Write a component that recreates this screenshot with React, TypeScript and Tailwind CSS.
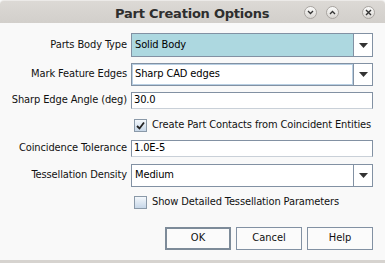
import React from "react";

const font = { fontFamily: '"DejaVu Sans Condensed", "DejaVu Sans", sans-serif' };

function Arrow() {
  return (
    <svg width="9" height="5" viewBox="0 0 9 5">
      <path d="M0 0 H9 L4.5 5 Z" fill="#333" />
    </svg>
  );
}

function Combo({ value, blue, focus }: { value: string; blue?: boolean; focus?: boolean }) {
  return (
    <div className="flex h-full w-full">
      <div
        className={`flex flex-1 items-center border border-[#8291a3] pl-[3px] text-[11px] tracking-[-0.12px] text-black ${
          blue ? "bg-[#add8e0]" : "bg-white"
        } ${focus ? "shadow-[inset_0_0_0_1px_#b8cfe3]" : ""}`}
      >
        {value}
      </div>
      <div className="flex w-[19px] items-center justify-center border border-l-0 border-[#8291a3] bg-white">
        <Arrow />
      </div>
    </div>
  );
}

function TextField({ value }: { value: string }) {
  return (
    <div className="flex h-full w-full items-center border border-[#8291a3] border-b-[#c9d0d8] bg-white pl-[2px] text-[11px] tracking-[-0.12px] text-black">
      {value}
    </div>
  );
}

function Check({ checked }: { checked?: boolean }) {
  return (
    <div className="flex h-[13px] w-[13px] items-center justify-center border border-[#8a99a8] bg-gradient-to-b from-[#f4f8fc] to-[#c7d7e8]">
      {checked && (
        <svg width="9" height="9" viewBox="0 0 9 9">
          <path d="M1 5 L3.5 7.5 L8 1.5" stroke="#222" strokeWidth="1.8" fill="none" />
        </svg>
      )}
    </div>
  );
}

function TitleBtn({ children }: { children: React.ReactNode }) {
  return (
    <div className="flex h-[13px] w-[13px] items-center justify-center rounded-full border border-[#a8a4a0] bg-gradient-to-b from-[#fbfbfa] to-[#d9d6d2]">
      {children}
    </div>
  );
}

function Row({ label, h, children, mt }: { label: string; h: string; children: React.ReactNode; mt: string }) {
  return (
    <div className={`flex ${h} ${mt}`}>
      <div className="flex w-[128px] items-center justify-end pr-[1px] text-[11px] tracking-[-0.12px] text-[#111]">{label}</div>
      <div className="ml-[3px] w-[242px]">{children}</div>
    </div>
  );
}

export default function App() {
  return (
    <div className="flex h-[263px] w-[385px] flex-col overflow-hidden bg-[#f9f9f9]" style={font}>
      <div className="relative flex h-[23px] items-center rounded-t-[4px] border-t border-[#eceae8] bg-gradient-to-b from-[#dcd9d5] to-[#d2cfcb]">
        <div
          className="absolute left-[115px] top-[3px] text-[13px] font-bold tracking-[-0.22px] text-[#2e2e2e]"
          style={{ fontFamily: '"DejaVu Sans", sans-serif' }}
        >
          Part Creation Options
        </div>
        <div className="absolute left-[304px] top-[5px] flex gap-[9px]">
          <TitleBtn>
            <svg width="7" height="5" viewBox="0 0 7 5">
              <path d="M1 1 L3.5 3.5 L6 1" stroke="#333" strokeWidth="1.3" fill="none" />
            </svg>
          </TitleBtn>
          <TitleBtn>
            <svg width="7" height="5" viewBox="0 0 7 5">
              <path d="M1 4 L3.5 1.5 L6 4" stroke="#333" strokeWidth="1.3" fill="none" />
            </svg>
          </TitleBtn>
        </div>
        <div className="absolute left-[362px] top-[5px]">
          <TitleBtn>
            <svg width="7" height="7" viewBox="0 0 7 7">
              <path d="M1 1 L6 6 M6 1 L1 6" stroke="#333" strokeWidth="1.4" fill="none" />
            </svg>
          </TitleBtn>
        </div>
      </div>

      <Row label="Parts Body Type" h="h-[24px]" mt="mt-[10px]">
        <Combo value="Solid Body" blue />
      </Row>
      <Row label="Mark Feature Edges" h="h-[23px]" mt="mt-[6px]">
        <Combo value="Sharp CAD edges" focus />
      </Row>
      <Row label="Sharp Edge Angle (deg)" h="h-[17px]" mt="mt-[6px]">
        <TextField value="30.0" />
      </Row>
      <div className="mt-[8px] flex h-[17px] items-center pl-[134px] text-[11px] tracking-[-0.12px] text-[#111]">
        <Check checked />
        <span className="ml-[5px]">Create Part Contacts from Coincident Entities</span>
      </div>
      <Row label="Coincidence Tolerance" h="h-[17px]" mt="mt-[6px]">
        <TextField value="1.0E-5" />
      </Row>
      <Row label="Tessellation Density" h="h-[23px]" mt="mt-[7px]">
        <Combo value="Medium" />
      </Row>
      <div className="mt-[7px] flex h-[17px] items-center pl-[134px] text-[11px] tracking-[-0.12px] text-[#111]">
        <Check />
        <span className="ml-[5px]">Show Detailed Tessellation Parameters</span>
      </div>
      <div className="mt-[16px] flex h-[23px] justify-end gap-[5px] pr-[12px]">
        <button className="w-[66px] border-2 border-[#7d8b99] bg-[#fbfbfb] text-[11px] text-[#111]">OK</button>
        <button className="w-[66px] border border-[#8291a3] bg-[#fbfbfb] text-[11px] text-[#111]">Cancel</button>
        <button className="w-[66px] border border-[#8291a3] bg-[#fbfbfb] text-[11px] text-[#111]">Help</button>
      </div>
      <div className="mt-auto h-[3px] bg-[#d6d3cf]" />
    </div>
  );
}
